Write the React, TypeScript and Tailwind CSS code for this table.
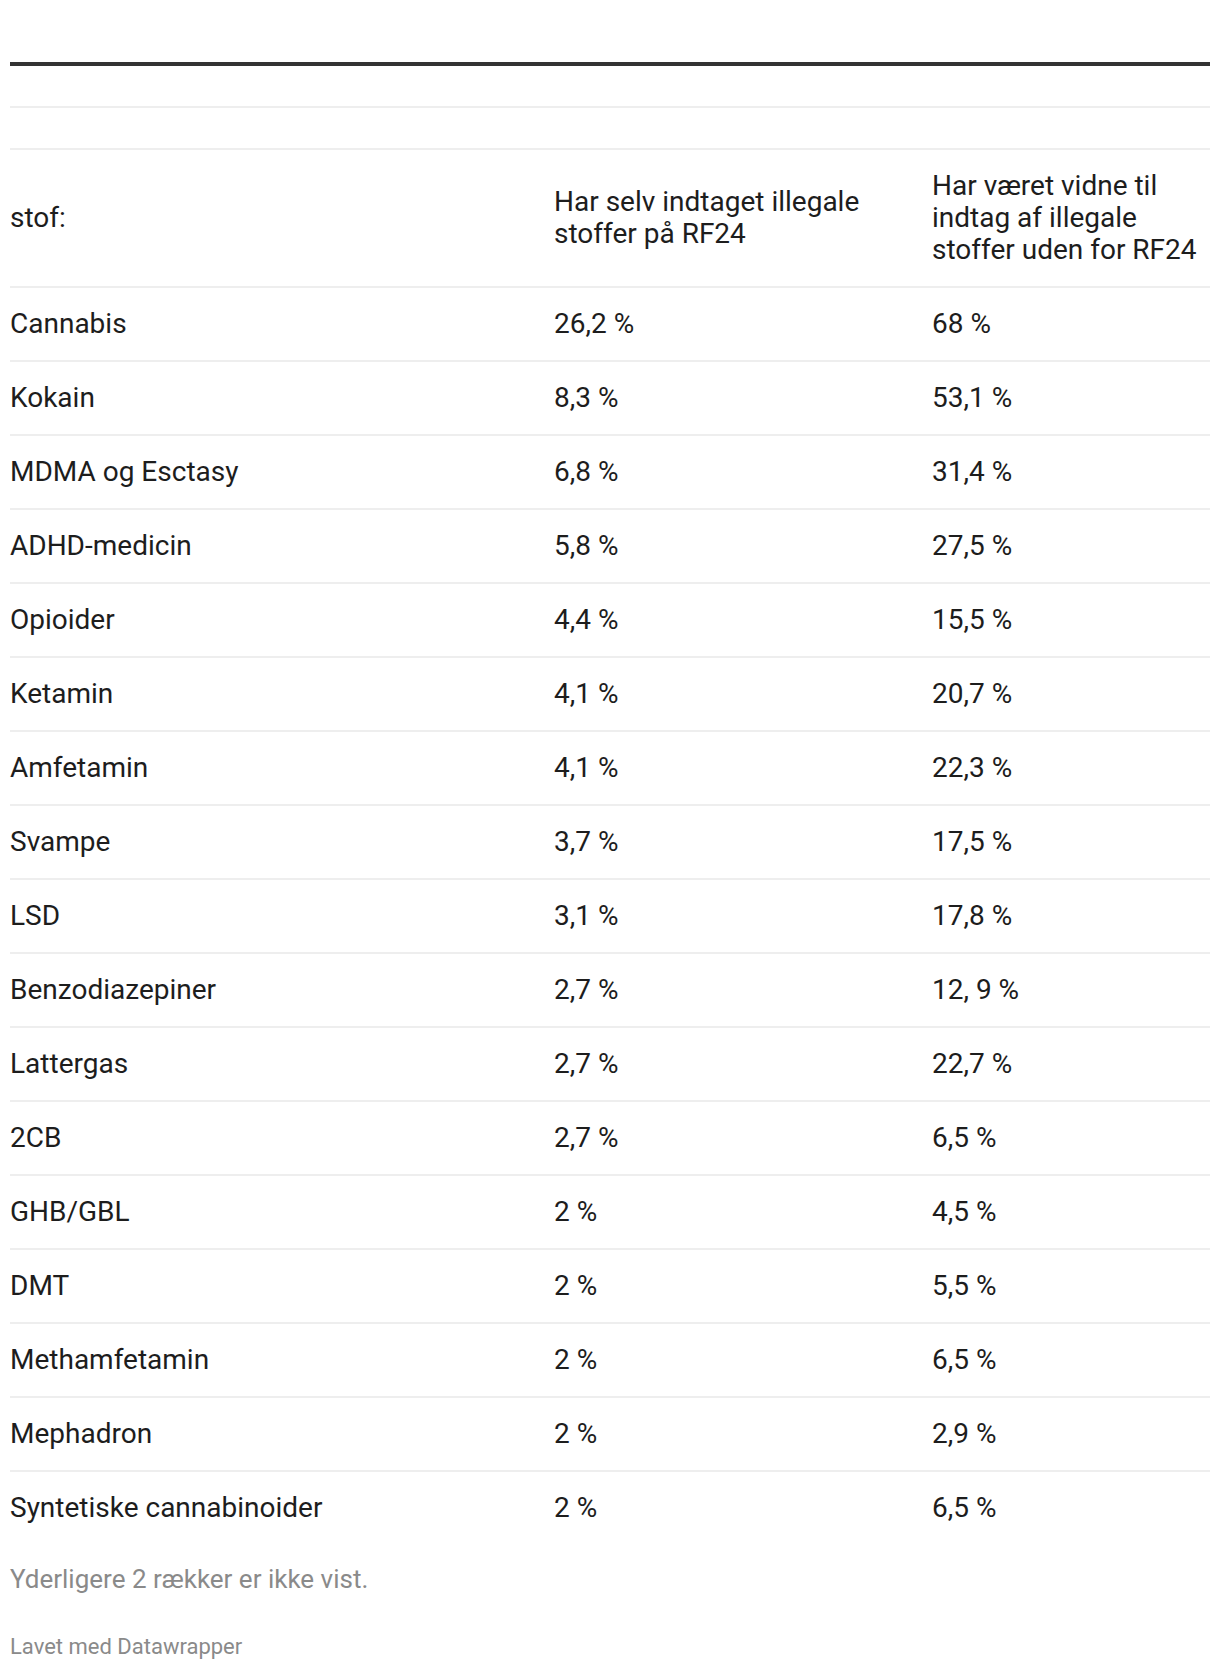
const rows: [string, string, string][] = [
  ["Cannabis", "26,2 %", "68 %"],
  ["Kokain", "8,3 %", "53,1 %"],
  ["MDMA og Esctasy", "6,8 %", "31,4 %"],
  ["ADHD-medicin", "5,8 %", "27,5 %"],
  ["Opioider", "4,4 %", "15,5 %"],
  ["Ketamin", "4,1 %", "20,7 %"],
  ["Amfetamin", "4,1 %", "22,3 %"],
  ["Svampe", "3,7 %", "17,5 %"],
  ["LSD", "3,1 %", "17,8 %"],
  ["Benzodiazepiner", "2,7 %", "12, 9 %"],
  ["Lattergas", "2,7 %", "22,7 %"],
  ["2CB", "2,7 %", "6,5 %"],
  ["GHB/GBL", "2 %", "4,5 %"],
  ["DMT", "2 %", "5,5 %"],
  ["Methamfetamin", "2 %", "6,5 %"],
  ["Mephadron", "2 %", "2,9 %"],
  ["Syntetiske cannabinoider", "2 %", "6,5 %"],
];

export default function App() {
  return (
    <div className="w-[1220px] h-[1670px] bg-white px-[10px] font-['Roboto',sans-serif] text-[#1d1d1d]">
      <div className="h-[62px]" />
      <div className="h-[4px] bg-[#333333]" />
      <div className="h-[42px] border-b-2 border-[#eeeeee]" />
      <div className="h-[42px] border-b-2 border-[#eeeeee]" />

      {/* header */}
      <div className="grid grid-cols-[544px_378px_278px] h-[138px] items-center border-b-2 border-[#eeeeee] text-[28px] leading-[32px]">
        <div>stof:</div>
        <div className="pr-[40px]">Har selv indtaget illegale stoffer på RF24</div>
        <div>Har været vidne til indtag af illegale stoffer uden for RF24</div>
      </div>

      {/* body */}
      <div>
        {rows.map(([name, self, seen]) => (
          <div
            key={name}
            className="grid grid-cols-[544px_378px_278px] h-[74px] items-center border-b-2 border-[#eeeeee] last:border-b-0 last:h-[72px] text-[28px] leading-[32px]"
          >
            <div>{name}</div>
            <div>{self}</div>
            <div>{seen}</div>
          </div>
        ))}
      </div>

      <div className="mt-[20px] text-[26px] leading-[30px] text-[#8a8a8a]">
        Yderligere 2 rækker er ikke vist.
      </div>
      <div className="mt-[40px] text-[22px] leading-[26px] text-[#8a8a8a]">
        Lavet med Datawrapper
      </div>
    </div>
  );
}
